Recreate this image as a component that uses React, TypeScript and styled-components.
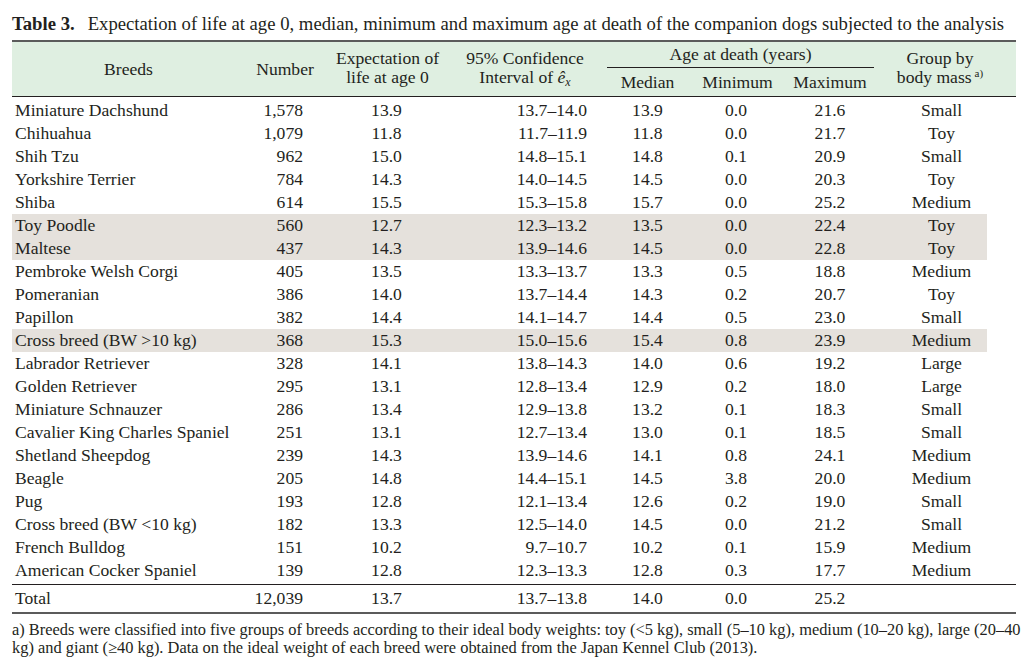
import React from "react";
import styled, { createGlobalStyle } from "styled-components";

const Global = createGlobalStyle`
  html, body { margin: 0; padding: 0; background: #ffffff; }
  body { font-family: "Liberation Serif", "Times New Roman", serif; color: #231f20; }
`;

const COLS = "233px 80px 125px 150px 95px 85px 100px 120px 16px";

const Page = styled.div`
  width: 1004px;
  padding: 12px 0 0 12px;
`;

const Title = styled.div`
  font-size: 18.7px;
  line-height: 24px;
  height: 28px;
  white-space: nowrap;
`;

const TitleLabel = styled.b`
  margin-right: 13px;
`;

const Header = styled.div`
  display: grid;
  grid-template-columns: ${COLS};
  grid-template-rows: 26px 28px;
  background: #dfefe1;
  border-top: 2px solid #5b5b5b;
  border-bottom: 1px solid #231f20;
  font-size: 17.6px;
`;

const HeadCell = styled.div<{ $col: string; $pb?: number }>`
  grid-column: ${(p) => p.$col};
  grid-row: 1 / 3;
  display: flex;
  flex-direction: column;
  justify-content: center;
  align-items: center;
  text-align: center;
  line-height: 19px;
  padding-bottom: ${(p) => p.$pb ?? 2}px;
`;

const SpanHead = styled.div`
  grid-column: 5 / 8;
  grid-row: 1;
  margin: 0 6px 0 7px;
  border-bottom: 1px solid #231f20;
  display: flex;
  align-items: center;
  justify-content: center;
  font-size: 17.6px;
  line-height: 19px;
`;

const SubHead = styled.div<{ $col: number }>`
  grid-column: ${(p) => p.$col};
  grid-row: 2;
  display: flex;
  align-items: center;
  justify-content: center;
  padding-top: 1px;
`;

const Sup = styled.sup`
  font-size: 11px;
  vertical-align: 6px;
  line-height: 0;
  margin-left: 3px;
`;

const Sub = styled.sub`
  font-size: 12px;
  vertical-align: -3px;
  line-height: 0;
`;

const Body = styled.div`
  padding: 2px 0 2px;
  border-bottom: 1px solid #231f20;
`;

const Row = styled.div<{ $hl?: boolean; $h?: number }>`
  display: grid;
  grid-template-columns: ${COLS};
  height: ${(p) => p.$h || 23}px;
  align-items: center;
  font-size: 17.6px;
  line-height: 23px;
  background: ${(p) =>
    p.$hl ? "linear-gradient(#e5e1dc, #e5e1dc) no-repeat -2px 0 / 977px 100%" : "none"};
`;

const Cell = styled.div<{ $align: "left" | "right" | "center"; $pl?: number; $pr?: number }>`
  text-align: ${(p) => p.$align};
  padding-left: ${(p) => p.$pl || 0}px;
  padding-right: ${(p) => p.$pr || 0}px;
  white-space: nowrap;
`;

const TotalWrap = styled.div`
  border-bottom: 2px solid #5b5b5b;
  padding: 1px 0 2px;
`;

const Foot = styled.div`
  padding-top: 7px;
  font-size: 16.4px;
  line-height: 18px;
`;

const FootLine = styled.div`
  white-space: nowrap;
`;

type R = [string, string, string, string, string, string, string, string, boolean?];

const rows: R[] = [
  ["Miniature Dachshund", "1,578", "13.9", "13.7–14.0", "13.9", "0.0", "21.6", "Small"],
  ["Chihuahua", "1,079", "11.8", "11.7–11.9", "11.8", "0.0", "21.7", "Toy"],
  ["Shih Tzu", "962", "15.0", "14.8–15.1", "14.8", "0.1", "20.9", "Small"],
  ["Yorkshire Terrier", "784", "14.3", "14.0–14.5", "14.5", "0.0", "20.3", "Toy"],
  ["Shiba", "614", "15.5", "15.3–15.8", "15.7", "0.0", "25.2", "Medium"],
  ["Toy Poodle", "560", "12.7", "12.3–13.2", "13.5", "0.0", "22.4", "Toy", true],
  ["Maltese", "437", "14.3", "13.9–14.6", "14.5", "0.0", "22.8", "Toy", true],
  ["Pembroke Welsh Corgi", "405", "13.5", "13.3–13.7", "13.3", "0.5", "18.8", "Medium"],
  ["Pomeranian", "386", "14.0", "13.7–14.4", "14.3", "0.2", "20.7", "Toy"],
  ["Papillon", "382", "14.4", "14.1–14.7", "14.4", "0.5", "23.0", "Small"],
  ["Cross breed (BW >10 kg)", "368", "15.3", "15.0–15.6", "15.4", "0.8", "23.9", "Medium", true],
  ["Labrador Retriever", "328", "14.1", "13.8–14.3", "14.0", "0.6", "19.2", "Large"],
  ["Golden Retriever", "295", "13.1", "12.8–13.4", "12.9", "0.2", "18.0", "Large"],
  ["Miniature Schnauzer", "286", "13.4", "12.9–13.8", "13.2", "0.1", "18.3", "Small"],
  ["Cavalier King Charles Spaniel", "251", "13.1", "12.7–13.4", "13.0", "0.1", "18.5", "Small"],
  ["Shetland Sheepdog", "239", "14.3", "13.9–14.6", "14.1", "0.8", "24.1", "Medium"],
  ["Beagle", "205", "14.8", "14.4–15.1", "14.5", "3.8", "20.0", "Medium"],
  ["Pug", "193", "12.8", "12.1–13.4", "12.6", "0.2", "19.0", "Small"],
  ["Cross breed (BW <10 kg)", "182", "13.3", "12.5–14.0", "14.5", "0.0", "21.2", "Small"],
  ["French Bulldog", "151", "10.2", "9.7–10.7", "10.2", "0.1", "15.9", "Medium"],
  ["American Cocker Spaniel", "139", "12.8", "12.3–13.3", "12.8", "0.3", "17.7", "Medium"],
];

const DataRow: React.FC<{ r: R; h?: number }> = ({ r, h }) => (
  <Row $hl={!!r[8]} $h={h}>
    <Cell $align="left" $pl={3}>{r[0]}</Cell>
    <Cell $align="right" $pr={22}>{r[1]}</Cell>
    <Cell $align="center" $pr={2}>{r[2]}</Cell>
    <Cell $align="right" $pr={13}>{r[3]}</Cell>
    <Cell $align="center">{r[4]}</Cell>
    <Cell $align="center" $pr={3}>{r[5]}</Cell>
    <Cell $align="center">{r[6]}</Cell>
    <Cell $align="center" $pl={3}>{r[7]}</Cell>
    <Cell $align="center" />
  </Row>
);

export default function App() {
  return (
    <Page>
      <Global />
      <Title>
        <TitleLabel>Table 3.</TitleLabel>
        Expectation of life at age 0, median, minimum and maximum age at death of the companion dogs subjected to the analysis
      </Title>
      <Header>
        <HeadCell $col="1" $pb={0}>Breeds</HeadCell>
        <HeadCell $col="2" $pb={0}>Number</HeadCell>
        <HeadCell $col="3">
          <span>Expectation of</span>
          <span>life at age 0</span>
        </HeadCell>
        <HeadCell $col="4">
          <span>95% Confidence</span>
          <span>
            Interval of <i>ê</i>
            <Sub>
              <i>x</i>
            </Sub>
          </span>
        </HeadCell>
        <SpanHead>Age at death (years)</SpanHead>
        <SubHead $col={5}>Median</SubHead>
        <SubHead $col={6}>Minimum</SubHead>
        <SubHead $col={7}>Maximum</SubHead>
        <HeadCell $col="8">
          <span>Group by</span>
          <span>
            body mass<Sup>a)</Sup>
          </span>
        </HeadCell>
      </Header>
      <Body>
        {rows.map((r) => (
          <DataRow key={r[0]} r={r} />
        ))}
      </Body>
      <TotalWrap>
        <DataRow r={["Total", "12,039", "13.7", "13.7–13.8", "14.0", "0.0", "25.2", ""]} h={24} />
      </TotalWrap>
      <Foot>
        <FootLine>
          a) Breeds were classified into five groups of breeds according to their ideal body weights: toy (&lt;5 kg), small (5–10 kg), medium (10–20 kg), large (20–40
        </FootLine>
        <FootLine>kg) and giant (≥40 kg). Data on the ideal weight of each breed were obtained from the Japan Kennel Club (2013).</FootLine>
      </Foot>
    </Page>
  );
}
